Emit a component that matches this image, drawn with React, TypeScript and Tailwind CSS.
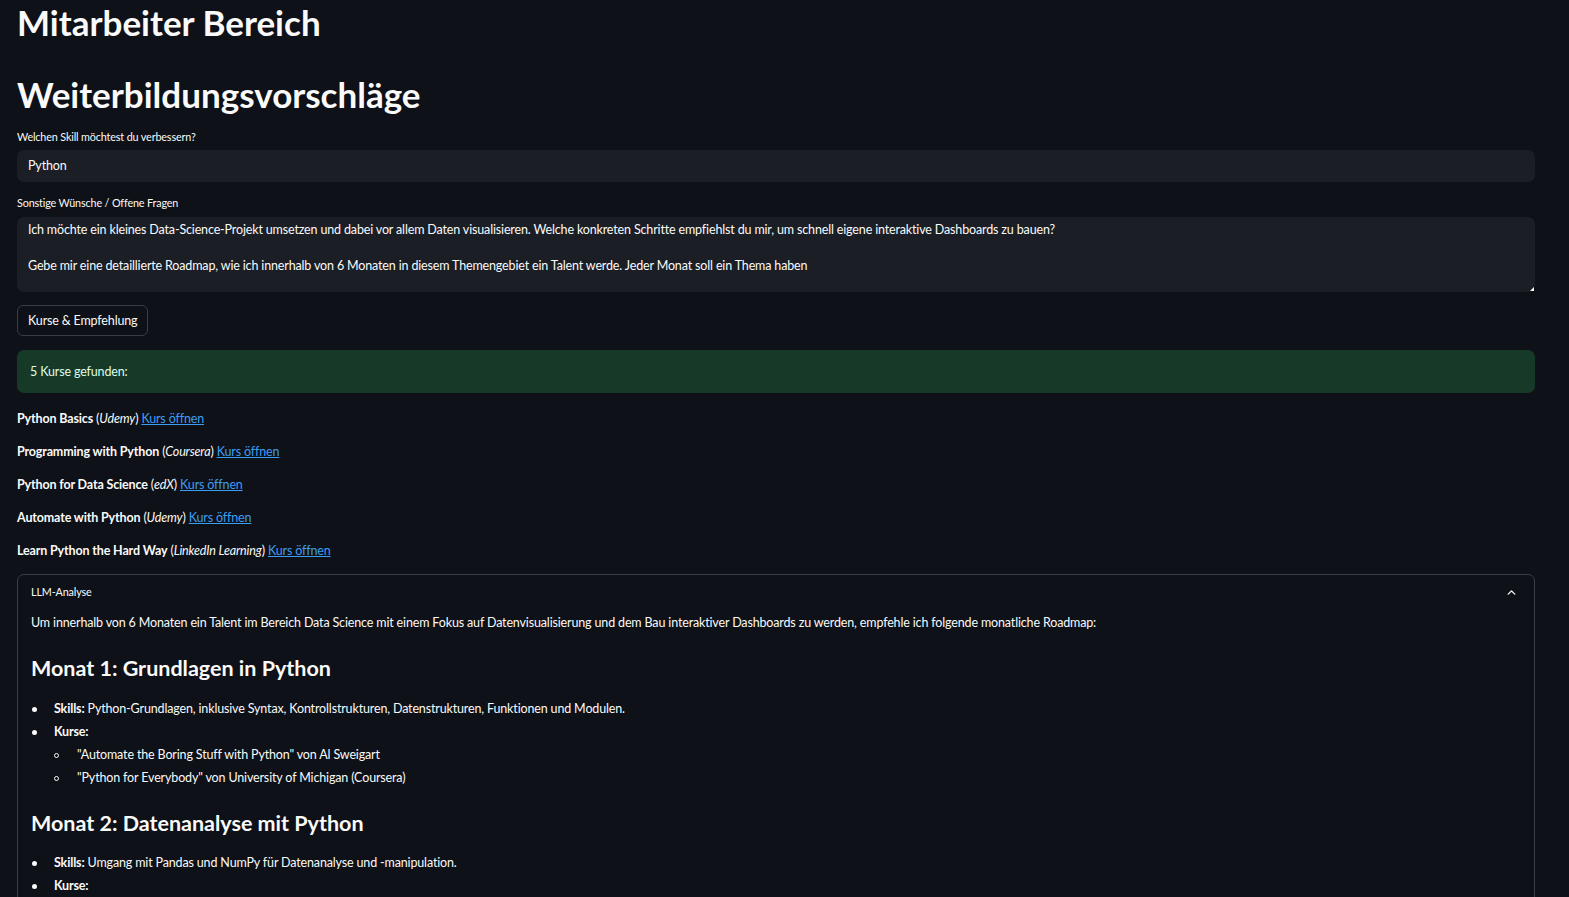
import type { ReactNode } from 'react'
import { ChevronUp } from 'lucide-react'

const courses = [
  { title: 'Python Basics', provider: 'Udemy' },
  { title: 'Programming with Python', provider: 'Coursera' },
  { title: 'Python for Data Science', provider: 'edX' },
  { title: 'Automate with Python', provider: 'Udemy' },
  { title: 'Learn Python the Hard Way', provider: 'LinkedIn Learning' },
]

function Bullet({ children }: { children: ReactNode }) {
  return (
    <li className="flex">
      <span className="w-[23px] shrink-0 flex items-start pt-[8px] pl-[1px]">
        <span className="w-[5px] h-[5px] rounded-full bg-[#fafafa]" />
      </span>
      <div>{children}</div>
    </li>
  )
}

function SubBullet({ children }: { children: ReactNode }) {
  return (
    <li className="flex">
      <span className="w-[23px] shrink-0 flex items-start pt-[8px] pl-[0px]">
        <span className="w-[5px] h-[5px] rounded-full border border-[#fafafa]" />
      </span>
      <div>{children}</div>
    </li>
  )
}

export default function App() {
  return (
    <div className="bg-[#0e1117] text-[#fafafa] font-['Lato','Noto_Sans',sans-serif] overflow-hidden h-[897px]">
      <div className="pl-[17px] pr-[34px] tracking-[-0.15px]">
        {/* Titles */}
        <h1 className="text-[35px] font-bold leading-[44px] tracking-normal">Mitarbeiter Bereich</h1>
        <h1 className="text-[35px] font-bold leading-[44px] mt-[28px] tracking-normal">Weiterbildungsvorschläge</h1>

        {/* Skill input */}
        <label className="block text-[10.8px] mt-[13px] leading-[16px]">Welchen Skill möchtest du verbessern?</label>
        <div className="mt-[5px] h-[32px] bg-[#1b1e25] rounded-[7px] flex items-center px-[11px] text-[12.5px]">
          Python
        </div>

        {/* Free text */}
        <label className="block text-[10.8px] mt-[13px] leading-[16px]">Sonstige Wünsche / Offene Fragen</label>
        <div className="relative mt-[6px] h-[75px] bg-[#1b1e25] rounded-[7px] px-[11px] pt-[4px] text-[12.5px] leading-[18px]">
          <p>Ich möchte ein kleines Data-Science-Projekt umsetzen und dabei vor allem Daten visualisieren. Welche konkreten Schritte empfiehlst du mir, um schnell eigene interaktive Dashboards zu bauen?</p>
          <p className="mt-[18px]">Gebe mir eine detaillierte Roadmap, wie ich innerhalb von 6 Monaten in diesem Themengebiet ein Talent werde. Jeder Monat soll ein Thema haben</p>
          <span className="absolute right-[1px] bottom-[1px] w-[4px] h-[4px] bg-white [clip-path:polygon(100%_0,100%_100%,0_100%)]" />
        </div>

        {/* Button */}
        <button className="mt-[13px] h-[31px] px-[10px] border border-[#3b3d45] rounded-[6px] text-[12.5px] pt-[2px]">
          Kurse &amp; Empfehlung
        </button>

        {/* Success */}
        <div className="mt-[14px] h-[43px] bg-[#173928] rounded-[7px] flex items-center px-[13px] pt-[2px] text-[12.5px] text-[#dffde9]">
          5 Kurse gefunden:
        </div>

        {/* Courses */}
        <div className="mt-[16px] flex flex-col gap-[14px] text-[12.5px] leading-[19px]">
          {courses.map((c) => (
            <p key={c.title}>
              <strong className="font-bold">{c.title}</strong> (<em>{c.provider}</em>){' '}
              <a href="#" className="text-[#3d9df3] underline">Kurs öffnen</a>
            </p>
          ))}
        </div>

        {/* Expander */}
        <div className="mt-[14px] border border-[#3b3d45] rounded-[7px] h-[400px]">
          <div className="flex items-center justify-between h-[34px] pl-[13px] pr-[16px] pt-[1px] text-[10.8px]">
            <span>LLM-Analyse</span>
            <ChevronUp size={13} strokeWidth={2.5} />
          </div>
          <div className="px-[13px] text-[12.5px] leading-[20px]">
            <p className="mt-[4px]">
              Um innerhalb von 6 Monaten ein Talent im Bereich Data Science mit einem Fokus auf Datenvisualisierung und dem Bau interaktiver Dashboards zu werden, empfehle ich folgende monatliche Roadmap:
            </p>

            <h2 className="text-[21.5px] font-bold leading-[30px] mt-[20px] tracking-normal">Monat 1: Grundlagen in Python</h2>
            <ul className="mt-[16px] flex flex-col gap-[3px]">
              <Bullet>
                <strong>Skills:</strong> Python-Grundlagen, inklusive Syntax, Kontrollstrukturen, Datenstrukturen, Funktionen und Modulen.
              </Bullet>
              <Bullet>
                <strong>Kurse:</strong>
                <ul className="mt-[3px] flex flex-col gap-[3px]">
                  <SubBullet>"Automate the Boring Stuff with Python" von Al Sweigart</SubBullet>
                  <SubBullet>"Python for Everybody" von University of Michigan (Coursera)</SubBullet>
                </ul>
              </Bullet>
            </ul>

            <h2 className="text-[21.5px] font-bold leading-[30px] mt-[20px] tracking-normal">Monat 2: Datenanalyse mit Python</h2>
            <ul className="mt-[15px] flex flex-col gap-[3px]">
              <Bullet>
                <strong>Skills:</strong> Umgang mit Pandas und NumPy für Datenanalyse und -manipulation.
              </Bullet>
              <Bullet>
                <strong>Kurse:</strong>
              </Bullet>
            </ul>
          </div>
        </div>
      </div>
    </div>
  )
}
